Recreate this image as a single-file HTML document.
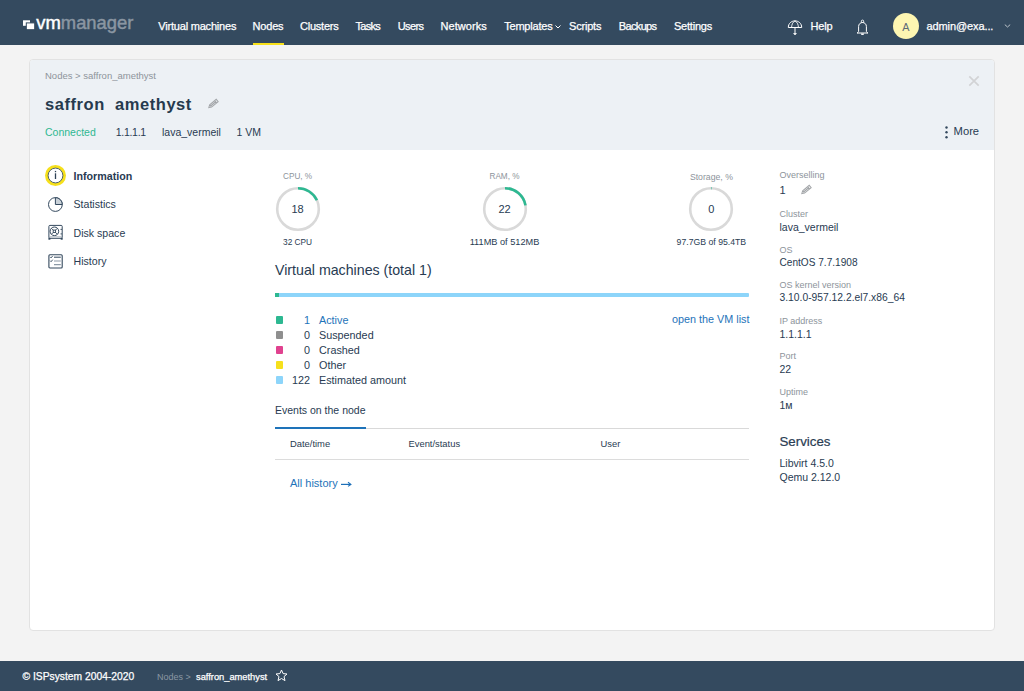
<!DOCTYPE html>
<html><head><meta charset="utf-8">
<style>
*{margin:0;padding:0;box-sizing:border-box}
html,body{width:1024px;height:691px;overflow:hidden}
body{background:#f3f3f3;font-family:"Liberation Sans",sans-serif;color:#34495e;position:relative}
.a{position:absolute;white-space:nowrap;line-height:20px}
.b{position:absolute}
</style></head><body>
<div class="b" style="left:0;top:0;width:1024px;height:45px;background:#344a5f"></div>
<svg class="b" style="left:22px;top:19px" width="14" height="12" viewBox="0 0 14 12"><rect x="1" y="1.3" width="7" height="5.5" fill="#fff"/><rect x="4.3" y="3.9" width="8.4" height="6.8" fill="#fff" stroke="#344a5f" stroke-width="1"/></svg>
<div class="a" style="left:36.3px;top:12.72px;font-size:18.4px;color:#fff"><span style="color:#fff;-webkit-text-stroke:0.45px #fff">vm</span><span style="color:#8a96a2;-webkit-text-stroke:0.45px #8a96a2">manager</span></div>
<div class="a" style="left:158.29999999999998px;top:16.19px;font-size:11px;color:#fff;letter-spacing:-0.2px;-webkit-text-stroke:0.25px #fff">Virtual machines</div>
<div class="a" style="left:252.6px;top:16.19px;font-size:11px;color:#fff;letter-spacing:-0.2px;-webkit-text-stroke:0.25px #fff">Nodes</div>
<div class="a" style="left:299.9px;top:16.19px;font-size:11px;color:#fff;letter-spacing:-0.2px;-webkit-text-stroke:0.25px #fff">Clusters</div>
<div class="a" style="left:355.5px;top:16.19px;font-size:11px;color:#fff;letter-spacing:-0.72px;-webkit-text-stroke:0.25px #fff">Tasks</div>
<div class="a" style="left:397.7px;top:16.19px;font-size:11px;color:#fff;letter-spacing:-0.6px;-webkit-text-stroke:0.25px #fff">Users</div>
<div class="a" style="left:440.59999999999997px;top:16.19px;font-size:11px;color:#fff;letter-spacing:0.04px;-webkit-text-stroke:0.25px #fff">Networks</div>
<div class="a" style="left:504.2px;top:16.19px;font-size:11px;color:#fff;letter-spacing:-0.2px;-webkit-text-stroke:0.25px #fff">Templates</div>
<div class="a" style="left:569.0px;top:16.19px;font-size:11px;color:#fff;letter-spacing:-0.2px;-webkit-text-stroke:0.25px #fff">Scripts</div>
<div class="a" style="left:618.8000000000001px;top:16.19px;font-size:11px;color:#fff;letter-spacing:-0.65px;-webkit-text-stroke:0.25px #fff">Backups</div>
<div class="a" style="left:673.9000000000001px;top:16.19px;font-size:11px;color:#fff;letter-spacing:-0.2px;-webkit-text-stroke:0.25px #fff">Settings</div>
<div class="a" style="left:810.5px;top:16.19px;font-size:11px;color:#fff;letter-spacing:-0.2px;-webkit-text-stroke:0.25px #fff">Help</div>
<div class="a" style="left:926.5px;top:16.19px;font-size:11px;color:#fff;letter-spacing:-0.1px;-webkit-text-stroke:0.25px #fff">admin@exa...</div>
<div class="b" style="left:253px;top:43px;width:31px;height:2px;background:#f8e11a"></div>
<svg class="b" style="left:555px;top:24.5px" width="6" height="4" viewBox="0 0 6 4"><path d="M0.5 0.5L3 3L5.5 0.5" fill="none" stroke="#fff" stroke-width="1"/></svg>
<svg class="b" style="left:787px;top:20px" width="16" height="16" viewBox="0 0 16 16">
<path d="M1.3 7.5 C1.3 3.3 4.5 0.9 8 0.9 C11.5 0.9 14.7 3.3 14.7 7.5 Z" fill="none" stroke="#fff" stroke-width="1"/>
<path d="M8 0.9 C5.6 2.2 4.6 4.8 4.6 7.5 M8 0.9 C10.4 2.2 11.4 4.8 11.4 7.5" fill="none" stroke="#fff" stroke-width="0.9"/>
<path d="M8 7.5 L8 13.6" fill="none" stroke="#fff" stroke-width="1"/>
<path d="M6.6 13.6 Q8 15.8 9.4 13.6 Z" fill="#fff" stroke="#fff" stroke-width="0.8"/></svg>
<svg class="b" style="left:856px;top:19px" width="13" height="17" viewBox="0 0 13 17">
<circle cx="6.5" cy="2.3" r="1.2" fill="none" stroke="#fff" stroke-width="0.9"/>
<path d="M2.6 12.3 L2.6 7.6 C2.6 5.1 4.3 3.5 6.5 3.5 C8.7 3.5 10.4 5.1 10.4 7.6 L10.4 12.3 C10.4 13.3 11.4 13.6 12 14 L1 14 C1.6 13.6 2.6 13.3 2.6 12.3 Z" fill="none" stroke="#fff" stroke-width="1"/>
<path d="M4.8 14.4 A1.7 1.6 0 0 0 8.2 14.4 Z" fill="#fff"/></svg>
<div class="b" style="left:893px;top:13px;width:26px;height:26px;border-radius:50%;background:#fdf6b2"></div>
<div class="a" style="left:902.3px;top:16.76px;font-size:10.8px;color:#5d6b78">A</div>
<svg class="b" style="left:1004px;top:24px" width="7" height="4" viewBox="0 0 7 4"><path d="M0.8 0.6L3.5 3L6.2 0.6" fill="none" stroke="#c9d0d6" stroke-width="0.9"/></svg>
<div class="b" style="left:29px;top:59px;width:966px;height:572px;border:1px solid #e2e2e2;border-radius:4px;background:#fff;overflow:hidden"><div class="b" style="left:0;top:0;width:964px;height:90px;background:#edf1f5"></div></div>
<div class="a" style="left:45px;top:65.71px;font-size:9.5px;color:#8d949b">Nodes &gt; saffron_amethyst</div>
<div class="a" style="left:45px;top:93.78px;font-size:16.5px;color:#263a4e;font-weight:bold;letter-spacing:0.55px">saffron&nbsp; amethyst</div>
<svg class="b" style="left:204.8px;top:95.8px" width="16" height="16" viewBox="0 0 16 16"><g transform="rotate(-40 8 8)"><path d="M2.5 8 L4.9 6.5 L13.5 6.5 L13.5 9.5 L4.9 9.5 Z M4.9 6.5 L4.9 9.5 M11.5 6.5 L11.5 9.5 M4.9 8 L11.5 8" fill="none" stroke="#a3a6a9" stroke-width="1"/></g></svg>
<div class="a" style="left:45px;top:122.06px;font-size:10.5px;color:#2eb891">Connected</div>
<div class="a" style="left:115.8px;top:122.06px;font-size:10.5px;color:#283b52;letter-spacing:-0.3px">1.1.1.1</div>
<div class="a" style="left:162px;top:122.06px;font-size:10.5px;color:#283b52">lava_vermeil</div>
<div class="a" style="left:236.5px;top:122.06px;font-size:10.5px;color:#283b52">1 VM</div>
<svg class="b" style="left:968px;top:75px" width="12" height="12" viewBox="0 0 12 12"><path d="M1.3 1.3L10.7 10.7M10.7 1.3L1.3 10.7" stroke="#d2d3d5" stroke-width="1.7"/></svg>
<svg class="b" style="left:944px;top:125px" width="5" height="15" viewBox="0 0 5 15"><circle cx="2.5" cy="2.5" r="1.2" fill="#34495e"/><circle cx="2.5" cy="7.3" r="1.2" fill="#34495e"/><circle cx="2.5" cy="12.3" r="1.2" fill="#34495e"/></svg>
<div class="a" style="left:953.6px;top:121.12px;font-size:11.2px;color:#283b52">More</div>
<div class="b" style="left:45px;top:165px;width:21px;height:21px;border-radius:50%;background:#f6e01c"></div>
<svg class="b" style="left:45px;top:165px" width="21" height="21" viewBox="0 0 21 21"><circle cx="10.5" cy="10.5" r="7.4" fill="#fff" stroke="#3d5266" stroke-width="0.9"/><rect x="9.85" y="8.3" width="1.3" height="5.7" fill="#2f4256"/><rect x="9.85" y="5.9" width="1.3" height="1.3" fill="#2f4256"/></svg>
<div class="a" style="left:73.5px;top:166.29px;font-size:10.7px;color:#283b52;font-weight:bold">Information</div>
<svg class="b" style="left:47px;top:196px" width="17" height="17" viewBox="0 0 17 17"><circle cx="8.4" cy="8.5" r="6.9" fill="none" stroke="#34495e" stroke-width="1"/><path d="M8.4 8.5 L8.4 1.6 A6.9 6.9 0 0 1 15.3 8.5 Z" fill="#c9d1d8" stroke="#34495e" stroke-width="1"/></svg>
<div class="a" style="left:73.5px;top:194.12px;font-size:10.6px;color:#283b52">Statistics</div>
<svg class="b" style="left:47px;top:224px" width="17" height="17" viewBox="0 0 17 17"><rect x="1.9" y="1.4" width="13.3" height="12.9" rx="1" fill="none" stroke="#34495e" stroke-width="1"/><rect x="1.4" y="13.9" width="2" height="1.8" fill="#34495e"/><rect x="13.7" y="13.9" width="2" height="1.8" fill="#34495e"/><circle cx="7.4" cy="7.3" r="4.3" fill="none" stroke="#34495e" stroke-width="1"/><rect x="6.2" y="6.1" width="2.4" height="2.4" fill="none" stroke="#34495e" stroke-width="0.9"/><path d="M4.4 4.3 L6.2 6.1 M10.4 4.3 L8.6 6.1 M4.4 10.3 L6.2 8.5 M10.4 10.3 L8.6 8.5 M13.5 5.4 L15 5.4 M13.5 9.9 L15 9.9" stroke="#34495e" stroke-width="0.9"/><path d="M2.4 12.8 L14.7 12.8" stroke="#a6b0ba" stroke-width="0.9"/></svg>
<div class="a" style="left:73.5px;top:222.72px;font-size:10.6px;color:#283b52">Disk space</div>
<svg class="b" style="left:47px;top:253px" width="17" height="17" viewBox="0 0 17 17"><rect x="1.9" y="1.7" width="13.3" height="13.3" rx="1" fill="none" stroke="#34495e" stroke-width="1.1"/><path d="M3.2 3.9 L4.1 4.9 L5.7 2.9 M3.2 7.7 L4.1 8.7 L5.7 6.7" fill="none" stroke="#34495e" stroke-width="0.9"/><path d="M7 4.2 L13.8 4.2" stroke="#34495e" stroke-width="1"/><path d="M7 8 L13.8 8 M7 11.7 L13.8 11.7" stroke="#8d9aa7" stroke-width="1.2"/></svg>
<div class="a" style="left:73.5px;top:250.52px;font-size:10.6px;color:#283b52">History</div>
<svg class="b" style="left:273.60px;top:185.10px" width="48" height="48" viewBox="0 0 48 48"><circle cx="24" cy="24" r="20.8" fill="none" stroke="#d9d9d9" stroke-width="2.6"/><circle cx="24" cy="24" r="20.8" fill="none" stroke="#2db891" stroke-width="2.6" stroke-dasharray="23.52 130.69" transform="rotate(-90 24 24)"/></svg>
<div class="a" style="left:237.60000000000002px;top:166.96px;font-size:8.2px;color:#8d949b;width:120px;text-align:center">CPU, %</div>
<div class="a" style="left:237.60000000000002px;top:199.19px;font-size:11px;color:#283b52;width:120px;text-align:center">18</div>
<div class="a" style="left:237.60000000000002px;top:231.82px;font-size:8.3px;color:#283b52;width:120px;text-align:center">32 CPU</div>
<svg class="b" style="left:480.50px;top:185.10px" width="48" height="48" viewBox="0 0 48 48"><circle cx="24" cy="24" r="20.8" fill="none" stroke="#d9d9d9" stroke-width="2.6"/><circle cx="24" cy="24" r="20.8" fill="none" stroke="#2db891" stroke-width="2.6" stroke-dasharray="28.75 130.69" transform="rotate(-90 24 24)"/></svg>
<div class="a" style="left:444.5px;top:166.96px;font-size:8.2px;color:#8d949b;width:120px;text-align:center">RAM, %</div>
<div class="a" style="left:444.5px;top:199.19px;font-size:11px;color:#283b52;width:120px;text-align:center">22</div>
<div class="a" style="left:444.5px;top:231.51px;font-size:9.2px;color:#283b52;width:120px;text-align:center">111MB of 512MB</div>
<svg class="b" style="left:687.40px;top:185.10px" width="48" height="48" viewBox="0 0 48 48"><circle cx="24" cy="24" r="20.8" fill="none" stroke="#d9d9d9" stroke-width="2.6"/><circle cx="24" cy="24" r="20.8" fill="none" stroke="#2db891" stroke-width="2.6" stroke-dasharray="0.52 130.69" transform="rotate(-90 24 24)"/></svg>
<div class="a" style="left:651.4px;top:166.78px;font-size:8.7px;color:#8d949b;width:120px;text-align:center">Storage, %</div>
<div class="a" style="left:651.4px;top:199.19px;font-size:11px;color:#283b52;width:120px;text-align:center">0</div>
<div class="a" style="left:651.4px;top:231.68px;font-size:8.7px;color:#283b52;width:120px;text-align:center">97.7GB of 95.4TB</div>
<div class="a" style="left:275px;top:260.48px;font-size:14.2px;color:#283b52">Virtual machines (total 1)</div>
<div class="b" style="left:275px;top:293px;width:474px;height:4px;background:#8dd5fa;border-radius:1px"></div>
<div class="b" style="left:275px;top:293px;width:4px;height:4px;background:#2db891"></div>
<div class="b" style="left:276px;top:316px;width:7px;height:8px;background:#2db891;border-radius:1px"></div>
<div class="a" style="left:260px;top:310.16px;font-size:10.8px;color:#1e73b9;width:50px;text-align:right">1</div>
<div class="a" style="left:319px;top:310.16px;font-size:10.8px;color:#1e73b9">Active</div>
<div class="b" style="left:276px;top:331px;width:7px;height:8px;background:#8f8f8f;border-radius:1px"></div>
<div class="a" style="left:260px;top:325.16px;font-size:10.8px;color:#283b52;width:50px;text-align:right">0</div>
<div class="a" style="left:319px;top:325.16px;font-size:10.8px;color:#283b52">Suspended</div>
<div class="b" style="left:276px;top:346px;width:7px;height:8px;background:#e0428f;border-radius:1px"></div>
<div class="a" style="left:260px;top:340.16px;font-size:10.8px;color:#283b52;width:50px;text-align:right">0</div>
<div class="a" style="left:319px;top:340.16px;font-size:10.8px;color:#283b52">Crashed</div>
<div class="b" style="left:276px;top:361px;width:7px;height:8px;background:#f6e01c;border-radius:1px"></div>
<div class="a" style="left:260px;top:355.16px;font-size:10.8px;color:#283b52;width:50px;text-align:right">0</div>
<div class="a" style="left:319px;top:355.16px;font-size:10.8px;color:#283b52">Other</div>
<div class="b" style="left:276px;top:376px;width:7px;height:8px;background:#8dd5fa;border-radius:1px"></div>
<div class="a" style="left:260px;top:370.16px;font-size:10.8px;color:#283b52;width:50px;text-align:right">122</div>
<div class="a" style="left:319px;top:370.16px;font-size:10.8px;color:#283b52">Estimated amount</div>
<div class="a" style="left:600px;top:309.16px;font-size:10.8px;color:#1e73b9;width:149.5px;text-align:right">open the VM list</div>
<div class="a" style="left:275px;top:400.06px;font-size:10.5px;color:#283b52">Events on the node</div>
<div class="b" style="left:275px;top:428px;width:474px;height:1px;background:#d9d9d9"></div>
<div class="b" style="left:275px;top:427px;width:91px;height:2px;background:#1e73b9"></div>
<div class="a" style="left:290px;top:433.74px;font-size:9.4px;color:#283b52">Date/time</div>
<div class="a" style="left:408.5px;top:433.74px;font-size:9.4px;color:#283b52">Event/status</div>
<div class="a" style="left:600.5px;top:433.74px;font-size:9.4px;color:#283b52">User</div>
<div class="b" style="left:275px;top:459px;width:474px;height:1px;background:#dcdcdc"></div>
<div class="a" style="left:290px;top:473.09px;font-size:11px;color:#1e73b9">All history</div>
<svg class="b" style="left:340px;top:481px" width="12" height="6" viewBox="0 0 12 6"><path d="M1 3.4 L10.6 3.4" stroke="#1d6fb8" stroke-width="1.2"/><path d="M8 1.2 L10.9 3.4 L8 5.4" fill="none" stroke="#1d6fb8" stroke-width="1.1"/></svg>
<div class="a" style="left:779.5px;top:165.08px;font-size:9px;color:#8d949b">Overselling</div>
<div class="a" style="left:779.5px;top:180.09px;font-size:11px;color:#283b52">1</div>
<svg class="b" style="left:797.6px;top:182px" width="16" height="16" viewBox="0 0 16 16"><g transform="rotate(-40 8 8)"><path d="M2.5 8 L4.9 6.5 L13.5 6.5 L13.5 9.5 L4.9 9.5 Z M4.9 6.5 L4.9 9.5 M11.5 6.5 L11.5 9.5 M4.9 8 L11.5 8" fill="none" stroke="#a3a6a9" stroke-width="1"/></g></svg>
<div class="a" style="left:779.5px;top:204.38px;font-size:9px;color:#8d949b">Cluster</div>
<div class="a" style="left:779.5px;top:217.26px;font-size:10.5px;color:#283b52">lava_vermeil</div>
<div class="a" style="left:779.5px;top:240.38px;font-size:9px;color:#8d949b">OS</div>
<div class="a" style="left:779.5px;top:253.30px;font-size:10.1px;color:#283b52">CentOS 7.7.1908</div>
<div class="a" style="left:779.5px;top:275.48px;font-size:9px;color:#8d949b">OS kernel version</div>
<div class="a" style="left:779.5px;top:287.93px;font-size:10.3px;color:#283b52">3.10.0-957.12.2.el7.x86_64</div>
<div class="a" style="left:779.5px;top:311.28px;font-size:9px;color:#8d949b">IP address</div>
<div class="a" style="left:779.5px;top:323.76px;font-size:10.5px;color:#283b52">1.1.1.1</div>
<div class="a" style="left:779.5px;top:346.28px;font-size:9px;color:#8d949b">Port</div>
<div class="a" style="left:779.5px;top:359.26px;font-size:10.5px;color:#283b52">22</div>
<div class="a" style="left:779.5px;top:382.38px;font-size:9px;color:#8d949b">Uptime</div>
<div class="a" style="left:779.5px;top:395.36px;font-size:10.5px;color:#283b52">1м</div>
<div class="a" style="left:779.5px;top:431.99px;font-size:13.3px;color:#283b52;-webkit-text-stroke:0.2px #2f4256">Services</div>
<div class="a" style="left:779.5px;top:453.36px;font-size:10.5px;color:#283b52">Libvirt 4.5.0</div>
<div class="a" style="left:779.5px;top:466.56px;font-size:10.5px;color:#283b52">Qemu 2.12.0</div>
<div class="b" style="left:0;top:661px;width:1024px;height:30px;background:#344a5f"></div>
<div class="a" style="left:22.5px;top:667.03px;font-size:10.3px;color:#fff;-webkit-text-stroke:0.25px #fff">© ISPsystem 2004-2020</div>
<div class="a" style="left:157px;top:666.88px;font-size:9px;color:#8b97a3">Nodes &gt;</div>
<div class="a" style="left:196px;top:666.78px;font-size:9.3px;color:#fff;-webkit-text-stroke:0.25px #fff">saffron_amethyst</div>
<svg class="b" style="left:275px;top:669px" width="13" height="13" viewBox="0 0 13 13"><path d="M6.5 1 L8.1 4.6 L12 5 L9 7.6 L10 11.6 L6.5 9.5 L3 11.6 L4 7.6 L1 5 L4.9 4.6 Z" fill="none" stroke="#fff" stroke-width="1"/></svg>
</body></html>
